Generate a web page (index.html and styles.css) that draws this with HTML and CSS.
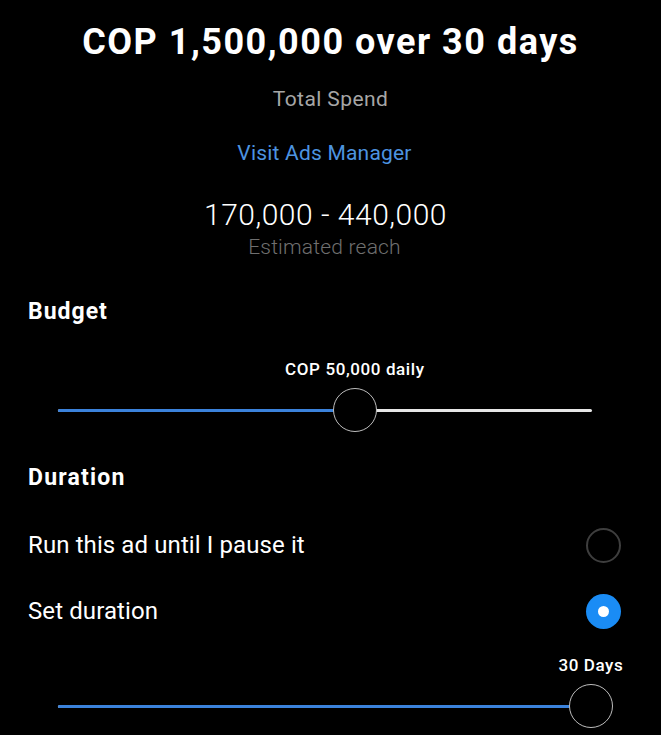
FILE: index.html
```html
<!DOCTYPE html>
<html>
<head>
<meta charset="utf-8">
<link rel="stylesheet" href="styles.css">
</head>
<body>
<div class="screen">
  <header class="summary">
    <h1 class="title">COP 1,500,000 over 30 days</h1>
    <div class="subtitle">Total Spend</div>
    <a class="link">Visit Ads Manager</a>
    <div class="reach">170,000 - 440,000</div>
    <div class="reach-label">Estimated reach</div>
  </header>

  <section class="section budget">
    <h2 class="section-title">Budget</h2>
    <div class="slider">
      <div class="track"><div class="fill" style="width:55.6%"></div></div>
      <div class="marker" style="left:55.6%">
        <span class="value">COP 50,000 daily</span>
        <span class="thumb"></span>
      </div>
    </div>
  </section>

  <section class="section duration">
    <h2 class="section-title">Duration</h2>
    <div class="options">
      <div class="option"><span>Run this ad until I pause it</span><span class="radio"></span></div>
      <div class="option"><span>Set duration</span><span class="radio checked"></span></div>
    </div>
    <div class="slider days">
      <div class="track"><div class="fill" style="width:99.8%"></div></div>
      <div class="marker" style="left:99.8%">
        <span class="value">30 Days</span>
        <span class="thumb"></span>
      </div>
    </div>
  </section>
</div>
</body>
</html>
```

FILE: styles.css
```css
html, body {
  margin: 0;
  padding: 0;
  background: #ffffff;
}
body {
  font-family: Roboto, "Liberation Sans", sans-serif;
  color: #ffffff;
}
.screen {
  width: 661px;
  height: 735px;
  background: #000000;
  overflow: hidden;
  box-sizing: border-box;
  padding-top: 22px;
}
.summary {
  display: flex;
  flex-direction: column;
  align-items: center;
  text-align: center;
}
.title {
  margin: 0;
  font-size: 36px;
  line-height: 40px;
  font-weight: 700;
  letter-spacing: 1.5px;
}
.subtitle {
  margin-top: 25px;
  font-size: 21px;
  line-height: 24px;
  color: #a6a6a6;
  letter-spacing: 0.4px;
}
.link {
  margin: 30px 12px 0 0;
  font-size: 21px;
  line-height: 24px;
  color: #4d94e0;
  letter-spacing: 0.2px;
}
.reach {
  margin: 34px 10px 0 0;
  font-size: 30px;
  line-height: 32px;
  font-weight: 300;
  letter-spacing: 0.5px;
}
.reach-label {
  margin: 4px 12px 0 0;
  font-size: 21px;
  line-height: 24px;
  color: #6f6f6f;
  font-weight: 300;
  letter-spacing: 0.2px;
}
.section {
  padding: 0 28px;
}
.section-title {
  margin: 0;
  font-size: 23px;
  line-height: 28px;
  font-weight: 700;
  letter-spacing: 1px;
}
.duration .section-title {
  letter-spacing: 1.2px;
}
.budget {
  margin-top: 39px;
}
.budget .section-title {
  margin-bottom: 83px;
}
.slider {
  position: relative;
  margin: 0 41px 0 30px;
  height: 3px;
}
.track {
  height: 3px;
  background: #e6e6e6;
  border-radius: 2px;
}
.fill {
  height: 3px;
  background: #3b82db;
  border-radius: 2px;
}
.marker {
  position: absolute;
  top: 1px;
  width: 0;
}
.value {
  position: absolute;
  bottom: 31px;
  left: 0;
  transform: translateX(-50%);
  white-space: nowrap;
  font-size: 17px;
  line-height: 20px;
  font-weight: 500;
  letter-spacing: 0.6px;
}
.thumb {
  position: absolute;
  left: -22px;
  top: -22px;
  width: 42px;
  height: 42px;
  border-radius: 50%;
  border: 1.5px solid #bdbdbd;
  background: #000;
}
.duration {
  margin-top: 52px;
}
.options {
  margin-top: 20px;
}
.option {
  display: flex;
  align-items: center;
  justify-content: space-between;
  height: 66px;
  font-size: 24px;
  letter-spacing: 0.1px;
}
.radio {
  width: 31px;
  height: 31px;
  border-radius: 50%;
  border: 2px solid #3e3e3e;
  margin-right: 12px;
}
.radio.checked {
  width: 35px;
  height: 35px;
  border: none;
  background: #1a8cf5;
  display: flex;
  align-items: center;
  justify-content: center;
}
.radio.checked::after {
  content: "";
  width: 11px;
  height: 11px;
  border-radius: 50%;
  background: #fff;
}
.days {
  margin-top: 61px;
}
```
